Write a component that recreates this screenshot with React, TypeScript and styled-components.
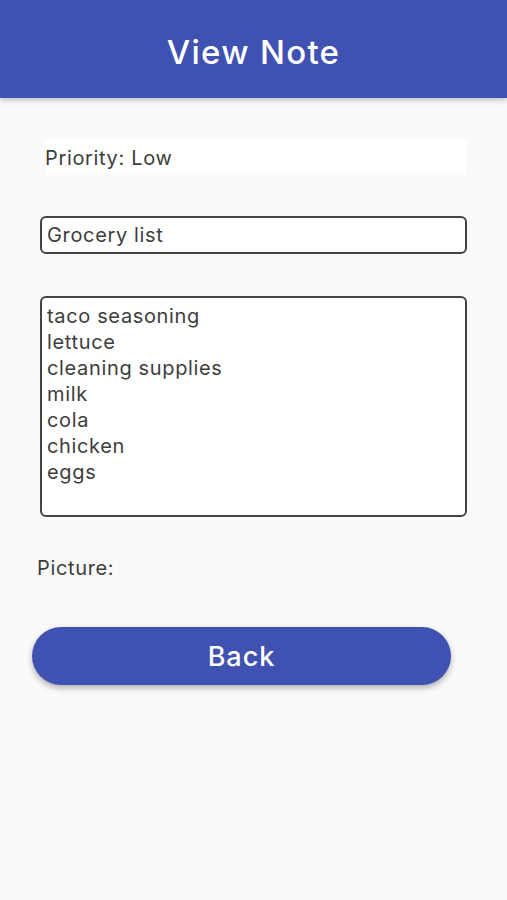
import React from "react";
import styled, { createGlobalStyle } from "styled-components";

const items = [
  "taco seasoning",
  "lettuce",
  "cleaning supplies",
  "milk",
  "cola",
  "chicken",
  "eggs",
];

export default function App() {
  return (
    <>
      <GlobalStyle />
      <Page>
        <Header>
          <Title>View Note</Title>
        </Header>
        <Content>
          <Priority>Priority: Low</Priority>
          <TitleField>Grocery list</TitleField>
          <BodyField>
            {items.map((item) => (
              <Line key={item}>{item}</Line>
            ))}
          </BodyField>
          <Label>Picture:</Label>
          <BackButton>Back</BackButton>
        </Content>
      </Page>
    </>
  );
}

const GlobalStyle = createGlobalStyle`
  html, body {
    margin: 0;
    padding: 0;
    background: #fafafa;
    font-family: Inter, "Noto Sans", sans-serif;
  }
`;
const Page = styled.div`
  min-height: 900px;
  background: #fafafa;
`;
const Header = styled.header`
  align-items: center;
  background: #3f51b1;
  box-shadow: 0 2px 6px rgba(0, 0, 0, 0.25);
  display: flex;
  height: 98px;
  justify-content: center;
`;
const Title = styled.h1`
  color: #fff;
  font-size: 33px;
  font-weight: 500;
  letter-spacing: 1.3px;
  margin: 0;
  padding-top: 6px;
`;
const Content = styled.div`
  display: flex;
  flex-direction: column;
  letter-spacing: 0.65px;
  padding: 42px 40px 0 40px;
`;
const Priority = styled.div`
  align-items: center;
  background: #fff;
  color: #3d3d3d;
  display: flex;
  font-size: 20px;
  height: 35px;
  margin-left: 5px;
  width: 422px;
`;
const TitleField = styled.div`
  align-items: center;
  background: #fff;
  border: 2px solid #444;
  border-radius: 6px;
  box-sizing: border-box;
  color: #3d3d3d;
  display: flex;
  font-size: 20px;
  height: 38px;
  margin-top: 41px;
  padding-left: 5px;
  width: 427px;
`;
const BodyField = styled.div`
  background: #fff;
  border: 2px solid #444;
  border-radius: 6px;
  box-sizing: border-box;
  color: #3d3d3d;
  display: flex;
  flex-direction: column;
  font-size: 20px;
  height: 221px;
  margin-top: 42px;
  padding: 5px 5px;
  width: 427px;
`;
const Line = styled.span`
  line-height: 26px;
`;
const Label = styled.div`
  color: #3d3d3d;
  font-size: 20px;
  margin-left: -3px;
  margin-top: 39px;
`;
const BackButton = styled.button`
  background: #3f51b1;
  border: none;
  border-radius: 29px;
  box-shadow: 0 3px 6px rgba(0, 0, 0, 0.3);
  color: #fff;
  font-family: inherit;
  font-size: 27px;
  font-weight: 500;
  height: 58px;
  letter-spacing: 1px;
  margin-left: -8px;
  margin-top: 47px;
  width: 419px;
`;
